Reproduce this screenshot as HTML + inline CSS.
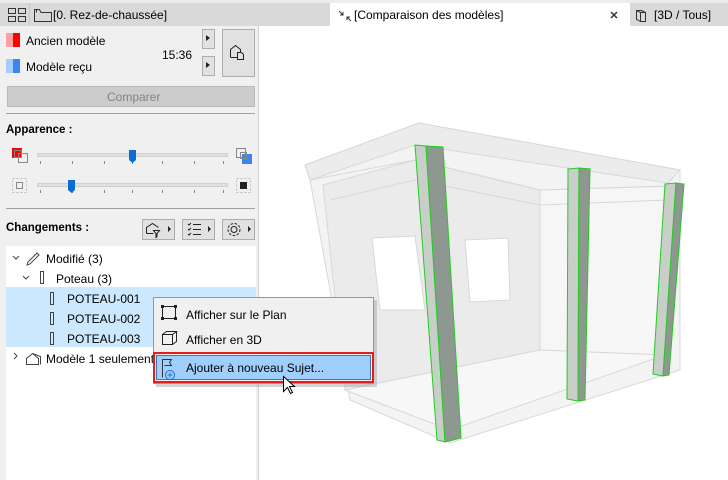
<!DOCTYPE html>
<html><head><meta charset="utf-8"><style>
*{margin:0;padding:0;box-sizing:border-box}
body{width:728px;height:480px;overflow:hidden;background:#fff;font-family:"Liberation Sans",sans-serif;font-size:12px;color:#000;position:relative}
.a{position:absolute}
.t{position:absolute;white-space:nowrap;font-size:12px}
</style></head><body>
<div class="a" style="left:0;top:0;width:728px;height:26px;background:#d9d9d9"></div>
<div class="a" style="left:0;top:0;width:728px;height:3px;background:#ececec"></div>
<div class="a" style="left:330px;top:3px;width:300px;height:23px;background:#fff"></div>
<div class="a" style="left:29px;top:3px;width:1px;height:23px;background:#c8c8c8"></div>
<svg class="a" style="left:0;top:0" width="728" height="26">
<g fill="none" stroke="#333" stroke-width="1">
<rect x="8.5" y="8.5" width="7" height="5"/><rect x="18.5" y="8.5" width="7" height="5"/>
<rect x="8.5" y="16.5" width="7" height="5"/><rect x="18.5" y="16.5" width="7" height="5"/>
<path d="M34.5 21.5V9.5H39.5L41 12.5H51.5V21.5Z M36.5 9.5V12.5"/>
<path d="M339 11l4 4M343 12v3h-3M351 21l-4-4M347 20v-3h3"/>
<path d="M611 12l6 6M617 12l-6 6" stroke-width="1.5"/>
<path d="M636.5 10.5l4 2v9l-4-2z M640.5 12.5h5v9h-5 M636.5 10.5h5l4 2"/>
</g></svg>
<div class="t" style="left:53px;top:8px">[0. Rez-de-chaussée]</div>
<div class="t" style="left:354px;top:8px">[Comparaison des modèles]</div>
<div class="t" style="left:654px;top:8px">[3D / Tous]</div>

<div class="a" style="left:0;top:26px;width:258px;height:454px;background:#f0f0f0"></div>
<div class="a" style="left:258px;top:26px;width:1px;height:454px;background:#d0d0d0"></div>
<div class="a" style="left:6px;top:33px;width:7px;height:14px;background:#f8a0a0"></div>
<div class="a" style="left:13px;top:33px;width:7px;height:14px;background:#f00"></div>
<div class="a" style="left:6px;top:59px;width:7px;height:14px;background:#a8ccf8"></div>
<div class="a" style="left:13px;top:59px;width:7px;height:14px;background:#3a86f0"></div>
<div class="t" style="left:26px;top:34px">Ancien modèle</div>
<div class="t" style="left:162px;top:48px">15:36</div>
<div class="t" style="left:26px;top:60px">Modèle reçu</div>
<div class="a" style="left:202px;top:29px;width:13px;height:20px;background:#e1e1e1;border:1px solid #adadad"></div>
<div class="a" style="left:202px;top:56px;width:13px;height:20px;background:#e1e1e1;border:1px solid #adadad"></div>
<div class="a" style="left:222px;top:29px;width:33px;height:48px;background:#e1e1e1;border:1px solid #adadad"></div>
<svg class="a" style="left:0;top:0" width="258" height="480">
<path d="M206 35v6l4-3z M206 62v6l4-3z" fill="#222"/>
<g fill="none" stroke="#222"><path d="M230.5 57.5v-8l5-4 5 4v3 M230.5 57.5h7 M237.5 52.5h4l2 2v5h-6z"/></g>
</svg>
<div class="a" style="left:7px;top:86px;width:248px;height:21px;background:#cccccc;border:1px solid #b8b8b8"></div>
<div class="t" style="left:107px;top:90px;color:#838383">Comparer</div>
<div class="a" style="left:6px;top:113px;width:249px;height:1px;background:#a0a0a0"></div>
<div class="t" style="left:6px;top:124px;font-weight:bold;font-size:11.5px">Apparence :</div>
<svg class="a" style="left:0;top:140px" width="258" height="60">
<rect x="12" y="8" width="10" height="10" fill="#f00"/>
<rect x="18.5" y="13.5" width="9" height="9" fill="none" stroke="#888"/>
<rect x="14.5" y="10.5" width="7" height="7" fill="none" stroke="#888"/>
<rect x="37.5" y="13.5" width="190" height="3" fill="#e0e0e0" stroke="#d0d0d0"/>
<g stroke="#888"><path d="M40.5 21v3M72.5 21v3M104.5 21v3M132.5 21v3M162.5 21v3M194.5 21v3M223.5 21v3M40.5 50v3M72.5 50v3M104.5 50v3M132.5 50v3M162.5 50v3M194.5 50v3M223.5 50v3"/></g>
<path d="M129 10h7v10l-3.5 3l-3.5-3z" fill="#0a6cd6"/>
<rect x="236.5" y="8.5" width="9" height="9" fill="none" stroke="#888"/>
<rect x="242" y="14" width="10" height="10" fill="#3a86f0"/>
<rect x="240.5" y="12.5" width="6" height="6" fill="none" stroke="#888"/>
<rect x="12.5" y="38.5" width="14" height="14" fill="none" stroke="#bbb" stroke-dasharray="2 2"/>
<rect x="16.5" y="42.5" width="6" height="6" fill="none" stroke="#888"/>
<rect x="37.5" y="43.5" width="190" height="3" fill="#e0e0e0" stroke="#d0d0d0"/>
<path d="M68 40h7v10l-3.5 3l-3.5-3z" fill="#0a6cd6"/>
<rect x="236.5" y="38.5" width="14" height="14" fill="none" stroke="#bbb" stroke-dasharray="2 2"/>
<rect x="240" y="42" width="7" height="7" fill="#222"/>
</svg>
<div class="a" style="left:6px;top:208px;width:249px;height:1px;background:#a0a0a0"></div>
<div class="t" style="left:6px;top:222px;font-weight:bold;font-size:11.5px">Changements :</div>
<div class="a" style="left:142px;top:219px;width:33px;height:21px;background:#e1e1e1;border:1px solid #adadad"></div>
<div class="a" style="left:182px;top:219px;width:33px;height:21px;background:#e1e1e1;border:1px solid #adadad"></div>
<div class="a" style="left:222px;top:219px;width:33px;height:21px;background:#e1e1e1;border:1px solid #adadad"></div>
<svg class="a" style="left:0;top:0" width="258" height="480">
<g fill="none" stroke="#222">
<path d="M146.5 233.5v-6l6-4 6 4 M146.5 233.5h7 M153.5 230.5h6l-2.5 3v3l-1 1v-4z"/>
<path d="M188 224l1 1 2-2 M188 229l1 1 2-2 M188 234l1 1 2-2 M193 224.5h8 M193 229.5h8 M193 234.5h8"/>
<circle cx="234" cy="229.5" r="3"/><circle cx="234" cy="229.5" r="6" stroke-dasharray="2.5 1.6"/>
</g>
<path d="M168 226v6l3-3z M208 226v6l3-3z M248 226v6l3-3z" fill="#222"/>
</svg>
<div class="a" style="left:6px;top:246px;width:250px;height:234px;background:#fff"></div>
<div class="a" style="left:6px;top:287px;width:250px;height:60px;background:#cce8ff"></div>
<svg class="a" style="left:0;top:0" width="258" height="480">
<g fill="none" stroke="#444">
<path d="M13 256l3 3 3-3 M23 276l3 3 3-3 M14 353l3 3-3 3"/>
<path d="M28 262l9-9 2 2-9 9-3 1z"/>
<path d="M40.5 271.5v12h3v-12z"/>
<path d="M50.5 292.5v12h3v-12z M50.5 312.5v12h3v-12z M50.5 332.5v12h3v-12z"/>
<path d="M26.5 364.5v-6l6-5 6 5v6h-12z M32.5 353.5l8 3v8"/>
</g></svg>
<div class="t" style="left:46px;top:252px">Modifié (3)</div>
<div class="t" style="left:56px;top:272px">Poteau (3)</div>
<div class="t" style="left:67px;top:292px">POTEAU-001</div>
<div class="t" style="left:67px;top:312px">POTEAU-002</div>
<div class="t" style="left:67px;top:332px">POTEAU-003</div>
<div class="t" style="left:46px;top:352px">Modèle 1 seulement</div>

<svg class="a" style="left:259px;top:26px" width="469" height="454" viewBox="259 26 469 454">
<g stroke="#d8d8d8" stroke-width="1">
<polygon points="305,165 419,123 680,170 680,370 450,443 350,400 310,180" fill="#f3f3f3"/>
<polygon points="305,165 419,123 680,170 668,183 415,145 310,180" fill="#ececec"/>
<polygon points="323,185 415,160 540,190 540,350 345,390" fill="#ebebeb"/>
<polygon points="540,190 672,186 665,355 540,350" fill="#f6f6f6"/>
<polygon points="345,390 540,350 665,355 450,430" fill="#f7f7f7"/>
<polyline points="310,180 415,160 540,190 672,186" fill="none"/>
<polyline points="330,200 415,180 540,205 668,200" fill="none"/>
<polygon points="372,238 415,236 425,310 380,310" fill="#fff"/>
<polygon points="465,240 508,238 510,300 470,302" fill="#fff"/>
</g>
<g stroke="#22cc22" stroke-width="1">
<polygon points="415,145 426,146 445,442 437,440" fill="#c7cfc8"/>
<polygon points="426,146 443,147 461,438 445,442" fill="#8f9890"/>
<polygon points="568,169 579,168 578,401 567,399" fill="#c7cfc8"/>
<polygon points="579,168 590,169 585,400 578,401" fill="#8f9890"/>
<polygon points="665,184 676,183 663,376 653,374" fill="#c7cfc8"/>
<polygon points="676,183 684,184 669,375 663,376" fill="#8f9890"/>
</g>
</svg>

<div class="a" style="left:156px;top:300px;width:221px;height:87px;background:#aaa;opacity:.5"></div>
<div class="a" style="left:153px;top:297px;width:221px;height:87px;background:#f0f0f0;border:1px solid #979797"></div>
<div class="a" style="left:153px;top:352px;width:221px;height:31px;border:2px solid #e41d1d"></div>
<div class="a" style="left:156px;top:355px;width:215px;height:25px;background:#99ccff;border:1px solid #2b6ab0;opacity:.9"></div>
<svg class="a" style="left:153px;top:297px" width="221" height="90">
<g fill="none" stroke="#222">
<rect x="9.5" y="9.5" width="13" height="12"/>
<path d="M9.5 37.5h10v10h-10z M9.5 37.5l4-3h10l-4 3 M23.5 34.5v10l-4 3"/>
<path d="M9.5 80.5v-18h9l-2 3 2 3h-7" stroke="#333"/>
<circle cx="17" cy="78" r="4.5" stroke="#1e6fd9"/><path d="M17 75.5v5M14.5 78h5" stroke="#1e6fd9"/>
</g>
<g fill="#222"><rect x="8" y="8" width="3" height="3"/><rect x="21" y="8" width="3" height="3"/><rect x="8" y="20" width="3" height="3"/><rect x="21" y="20" width="3" height="3"/></g>
</svg>
<div class="t" style="left:186px;top:308px">Afficher sur le Plan</div>
<div class="t" style="left:186px;top:333px">Afficher en 3D</div>
<div class="t" style="left:186px;top:361px">Ajouter à nouveau Sujet...</div>
<svg class="a" style="left:282px;top:375px" width="16" height="22">
<path d="M1.5 1.5v15l4-4 3 6 2-1-3-6h5z" fill="#fff" stroke="#000"/>
</svg>
</body></html>
